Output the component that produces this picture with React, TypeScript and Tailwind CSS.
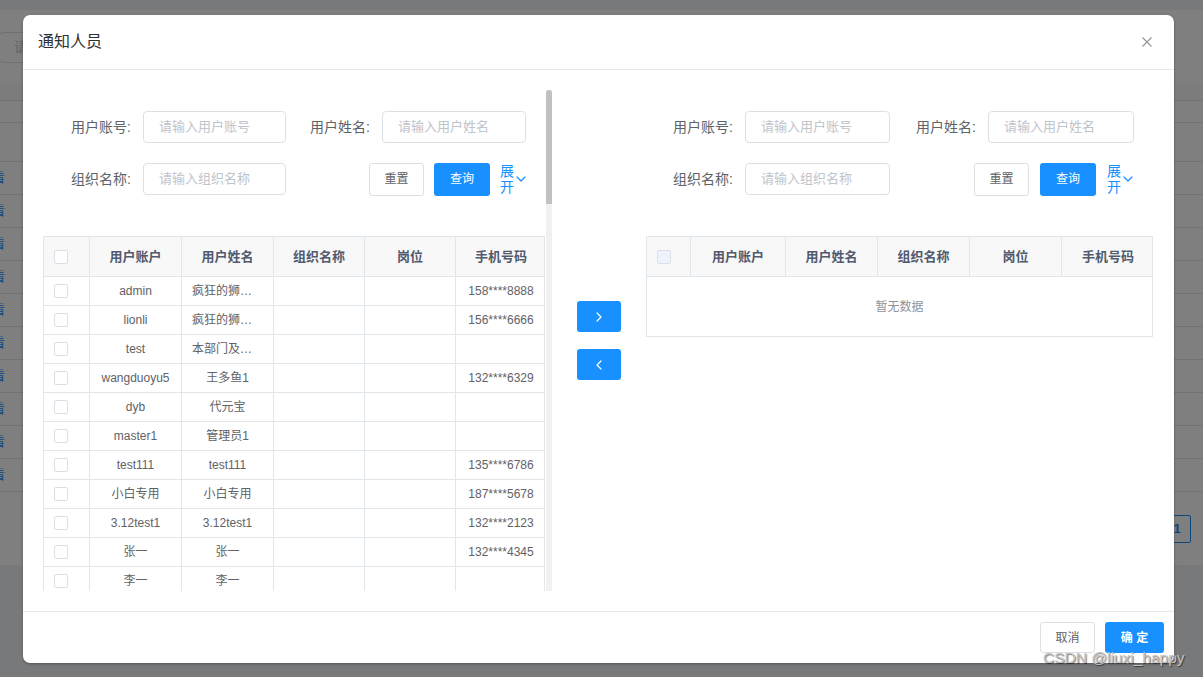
import React from "react";

type Row = { acc: string; name: string; trunc?: boolean; phone: string };

const rows: Row[] = [
  { acc: "admin", name: "疯狂的狮…", trunc: true, phone: "158****8888" },
  { acc: "lionli", name: "疯狂的狮…", trunc: true, phone: "156****6666" },
  { acc: "test", name: "本部门及…", trunc: true, phone: "" },
  { acc: "wangduoyu5", name: "王多鱼1", phone: "132****6329" },
  { acc: "dyb", name: "代元宝", phone: "" },
  { acc: "master1", name: "管理员1", phone: "" },
  { acc: "test111", name: "test111", phone: "135****6786" },
  { acc: "小白专用", name: "小白专用", phone: "187****5678" },
  { acc: "3.12test1", name: "3.12test1", phone: "132****2123" },
  { acc: "张一", name: "张一", phone: "132****4345" },
  { acc: "李一", name: "李一", phone: "" },
];

function Label({ children }: { children: React.ReactNode }) {
  return (
    <div className="w-[72px] shrink-0 pr-[12px] text-right text-[14px] text-[#606266] whitespace-nowrap leading-[32px]">
      {children}
    </div>
  );
}

function Input({ ph, w }: { ph: string; w: string }) {
  return (
    <div
      className={`${w} h-[32px] shrink-0 border border-[#dcdfe6] rounded-[4px] pl-[15px] flex items-center text-[13px] text-[#c0c4cc] whitespace-nowrap`}
    >
      {ph}
    </div>
  );
}

function Chevron({ dir, cls }: { dir: "down" | "left" | "right"; cls: string }) {
  const d =
    dir === "down" ? "M1 1 L5 5 L9 1" : dir === "right" ? "M1 1 L5 5 L1 9" : "M5 1 L1 5 L5 9";
  const vb = dir === "down" ? "0 0 10 6" : "0 0 6 10";
  return (
    <svg viewBox={vb} className={cls} fill="none" stroke="currentColor" strokeWidth="1.2" strokeLinecap="round" strokeLinejoin="round">
      <path d={d} />
    </svg>
  );
}

function SearchForm({ side }: { side: "l" | "r" }) {
  const l = side === "l";
  return (
    <div className={`${l ? "pl-[28px] w-[483px]" : "pl-[27px] w-[487px]"} pt-[21px] flex flex-col gap-[20px]`}>
      <div className="flex items-center h-[32px]">
        <Label>用户账号:</Label>
        <Input ph="请输入用户账号" w={l ? "w-[143px]" : "w-[145px]"} />
        <div className={l ? "ml-[24px]" : "ml-[26px]"}>
          <Label>用户姓名:</Label>
        </div>
        <Input ph="请输入用户姓名" w={l ? "w-[144px]" : "w-[146px]"} />
      </div>
      <div className="flex items-center h-[32px]">
        <Label>组织名称:</Label>
        <Input ph="请输入组织名称" w={l ? "w-[143px]" : "w-[145px]"} />
        <div className="ml-auto flex items-center">
          <div className="w-[55px] h-[33px] border border-[#dcdfe6] rounded-[3px] flex items-center justify-center text-[12px] text-[#606266]">
            重置
          </div>
          <div className={`${l ? "ml-[10px]" : "ml-[11px]"} w-[56px] h-[33px] bg-[#1890ff] rounded-[3px] flex items-center justify-center text-[12px] text-white`}>
            查询
          </div>
          <div className={`${l ? "ml-[10px]" : "ml-[11px]"} flex items-center text-[#1890ff]`}>
            <div className="w-[15px] text-[14px] leading-[16px] break-all">展开</div>
            <Chevron dir="down" cls="w-[10px] h-[6px] ml-[1px] mb-[1px]" />
          </div>
        </div>
      </div>
    </div>
  );
}

function Checkbox({ disabled }: { disabled?: boolean }) {
  return (
    <div
      className={`w-[14px] h-[14px] rounded-[2px] border border-[#dcdfe6] ${disabled ? "bg-[#edf2fc]" : "bg-white"}`}
    />
  );
}

const headers = ["用户账户", "用户姓名", "组织名称", "岗位", "手机号码"];

function TableHead({ cols, pl, disabled }: { cols: string; pl: string; disabled?: boolean }) {
  return (
    <div className={`grid ${cols} h-[40px] bg-[#f8f8f9] border-b border-[#dfe6ec]`}>
      <div className={`flex items-center ${pl} border-r border-[#dfe6ec]`}>
        <Checkbox disabled={disabled} />
      </div>
      {headers.map((h, i) => (
        <div
          key={h}
          className={`flex items-center justify-center text-[13px] font-bold text-[#515a6e] ${i < 4 ? "border-r border-[#dfe6ec]" : ""}`}
        >
          {h}
        </div>
      ))}
    </div>
  );
}

const leftCols = "grid-cols-[46px_92px_92px_91px_91px_90px]";
const rightCols = "grid-cols-[44px_95px_92px_92px_92px_92px]";

export default function App() {
  return (
    <div className="relative w-[1203px] h-[677px] overflow-hidden bg-[#f0f2f5] font-['Liberation_Sans','Noto_Sans_CJK_SC',sans-serif]">
      {/* Underlying page */}
      <div className="flex flex-col h-full">
        <div className="h-[10px] shrink-0" />
        <div className="bg-white h-[555px] shrink-0 flex flex-col">
          <div className="h-[22px] shrink-0" />
          <div className="w-[120px] h-[31px] ml-[-1px] border border-[#dcdfe6] rounded-[4px] flex items-center pl-[14px] text-[14px] text-[#c0c4cc]">
            请
          </div>
          <div className="h-[20px] shrink-0" />
          <div className="h-[18px] shrink-0 bg-[#f8f8f9] border-b border-[#dfe6ec]" />
          <div className="h-[22px] shrink-0 border-b border-[#dfe6ec]" />
          <div className="h-[39px] shrink-0 border-b border-[#dfe6ec]" />
          {Array.from({ length: 10 }).map((_, i) => (
            <div key={i} className="h-[33px] shrink-0 border-b border-[#dfe6ec] flex items-center">
              <span className="ml-[-8px] text-[13px] text-[#1890ff]">看</span>
            </div>
          ))}
          <div className="flex justify-end mt-[23px] pr-[12px]">
            <div className="w-[28px] h-[28px] border border-[#1890ff] rounded-[2px] flex items-center justify-center text-[13px] font-bold text-[#1890ff]">
              1
            </div>
          </div>
        </div>
      </div>

      {/* Overlay */}
      <div className="absolute inset-0 bg-black/50" />

      {/* Dialog */}
      <div className="absolute left-[23px] top-[15px] w-[1151px] h-[648px] bg-white rounded-[7px] flex flex-col overflow-hidden shadow-[0_1px_3px_rgba(0,0,0,0.3)]">
        <div className="h-[55px] shrink-0 border-b border-[#e8e8e8] flex items-center justify-between pl-[15px] pr-[22px]">
          <div className="text-[16px] text-[#303133] pb-[1px]">通知人员</div>
          <svg viewBox="0 0 10 10" className="w-[10px] h-[10px] text-[#909399]" stroke="currentColor" strokeWidth="1.1" fill="none">
            <path d="M0.5 0.5 L9.5 9.5 M9.5 0.5 L0.5 9.5" />
          </svg>
        </div>

        <div className="flex-1 flex pl-[20px] pr-[21px] py-[20px] min-h-0">
          {/* Left panel */}
          <div className="w-[509px] flex h-full">
            <div className="w-[503px] h-full overflow-hidden flex flex-col">
              <SearchForm side="l" />
              <div className="mt-[41px] w-[502px] shrink-0 border-l border-r border-t border-[#dfe6ec]">
                <TableHead cols={leftCols} pl="pl-[10px]" />
                {rows.map((r, i) => (
                  <div key={i} className={`grid ${leftCols} h-[29px] border-b border-[#dfe6ec] text-[12px] text-[#606266]`}>
                    <div className="flex items-center pl-[10px] border-r border-[#dfe6ec]">
                      <Checkbox />
                    </div>
                    <div className="flex items-center justify-center border-r border-[#dfe6ec] whitespace-nowrap">{r.acc}</div>
                    <div
                      className={`flex items-center ${r.trunc ? "pl-[10px]" : "justify-center"} border-r border-[#dfe6ec] whitespace-nowrap`}
                    >
                      {r.name}
                    </div>
                    <div className="border-r border-[#dfe6ec]" />
                    <div className="border-r border-[#dfe6ec]" />
                    <div className="flex items-center justify-center whitespace-nowrap">{r.phone}</div>
                  </div>
                ))}
              </div>
            </div>
            <div className="w-[6px] h-full bg-[#f1f1f1] flex flex-col">
              <div className="h-[114px] bg-[#c1c1c1] rounded-t-[3px]" />
            </div>
          </div>

          {/* Middle buttons */}
          <div className="w-[94px] flex flex-col items-center justify-center gap-[17px]">
            <div className="w-[44px] h-[31px] rounded-[3px] bg-[#1890ff] flex items-center justify-center text-white">
              <Chevron dir="right" cls="w-[6px] h-[10px]" />
            </div>
            <div className="w-[44px] h-[31px] rounded-[3px] bg-[#1890ff] flex items-center justify-center text-white">
              <Chevron dir="left" cls="w-[6px] h-[10px]" />
            </div>
          </div>

          {/* Right panel */}
          <div className="w-[507px] flex flex-col">
            <SearchForm side="r" />
            <div className="mt-[41px] w-[507px] border border-[#dfe6ec]">
              <TableHead cols={rightCols} pl="pl-[10px]" disabled />
              <div className="h-[59px] flex items-center justify-center text-[12px] text-[#909399]">暂无数据</div>
            </div>
          </div>
        </div>

        <div className="h-[52px] shrink-0 border-t border-[#e8e8e8] flex items-start justify-end pt-[10px] pr-[10px] gap-[10px]">
          <div className="w-[55px] h-[31px] border border-[#dcdfe6] rounded-[3px] flex items-center justify-center text-[12px] text-[#606266]">
            取消
          </div>
          <div className="w-[59px] h-[31px] bg-[#1890ff] rounded-[3px] flex items-center justify-center text-[12px] font-bold text-white whitespace-pre">
            确 定
          </div>
        </div>
      </div>

      {/* Watermark */}
      <div className="absolute left-[1043px] top-[646px] text-[15.5px] text-[#c4c4c4] [text-shadow:1px_1px_1px_rgba(0,0,0,0.55)] whitespace-nowrap">
        CSDN @liuxi_happy
      </div>
    </div>
  );
}
